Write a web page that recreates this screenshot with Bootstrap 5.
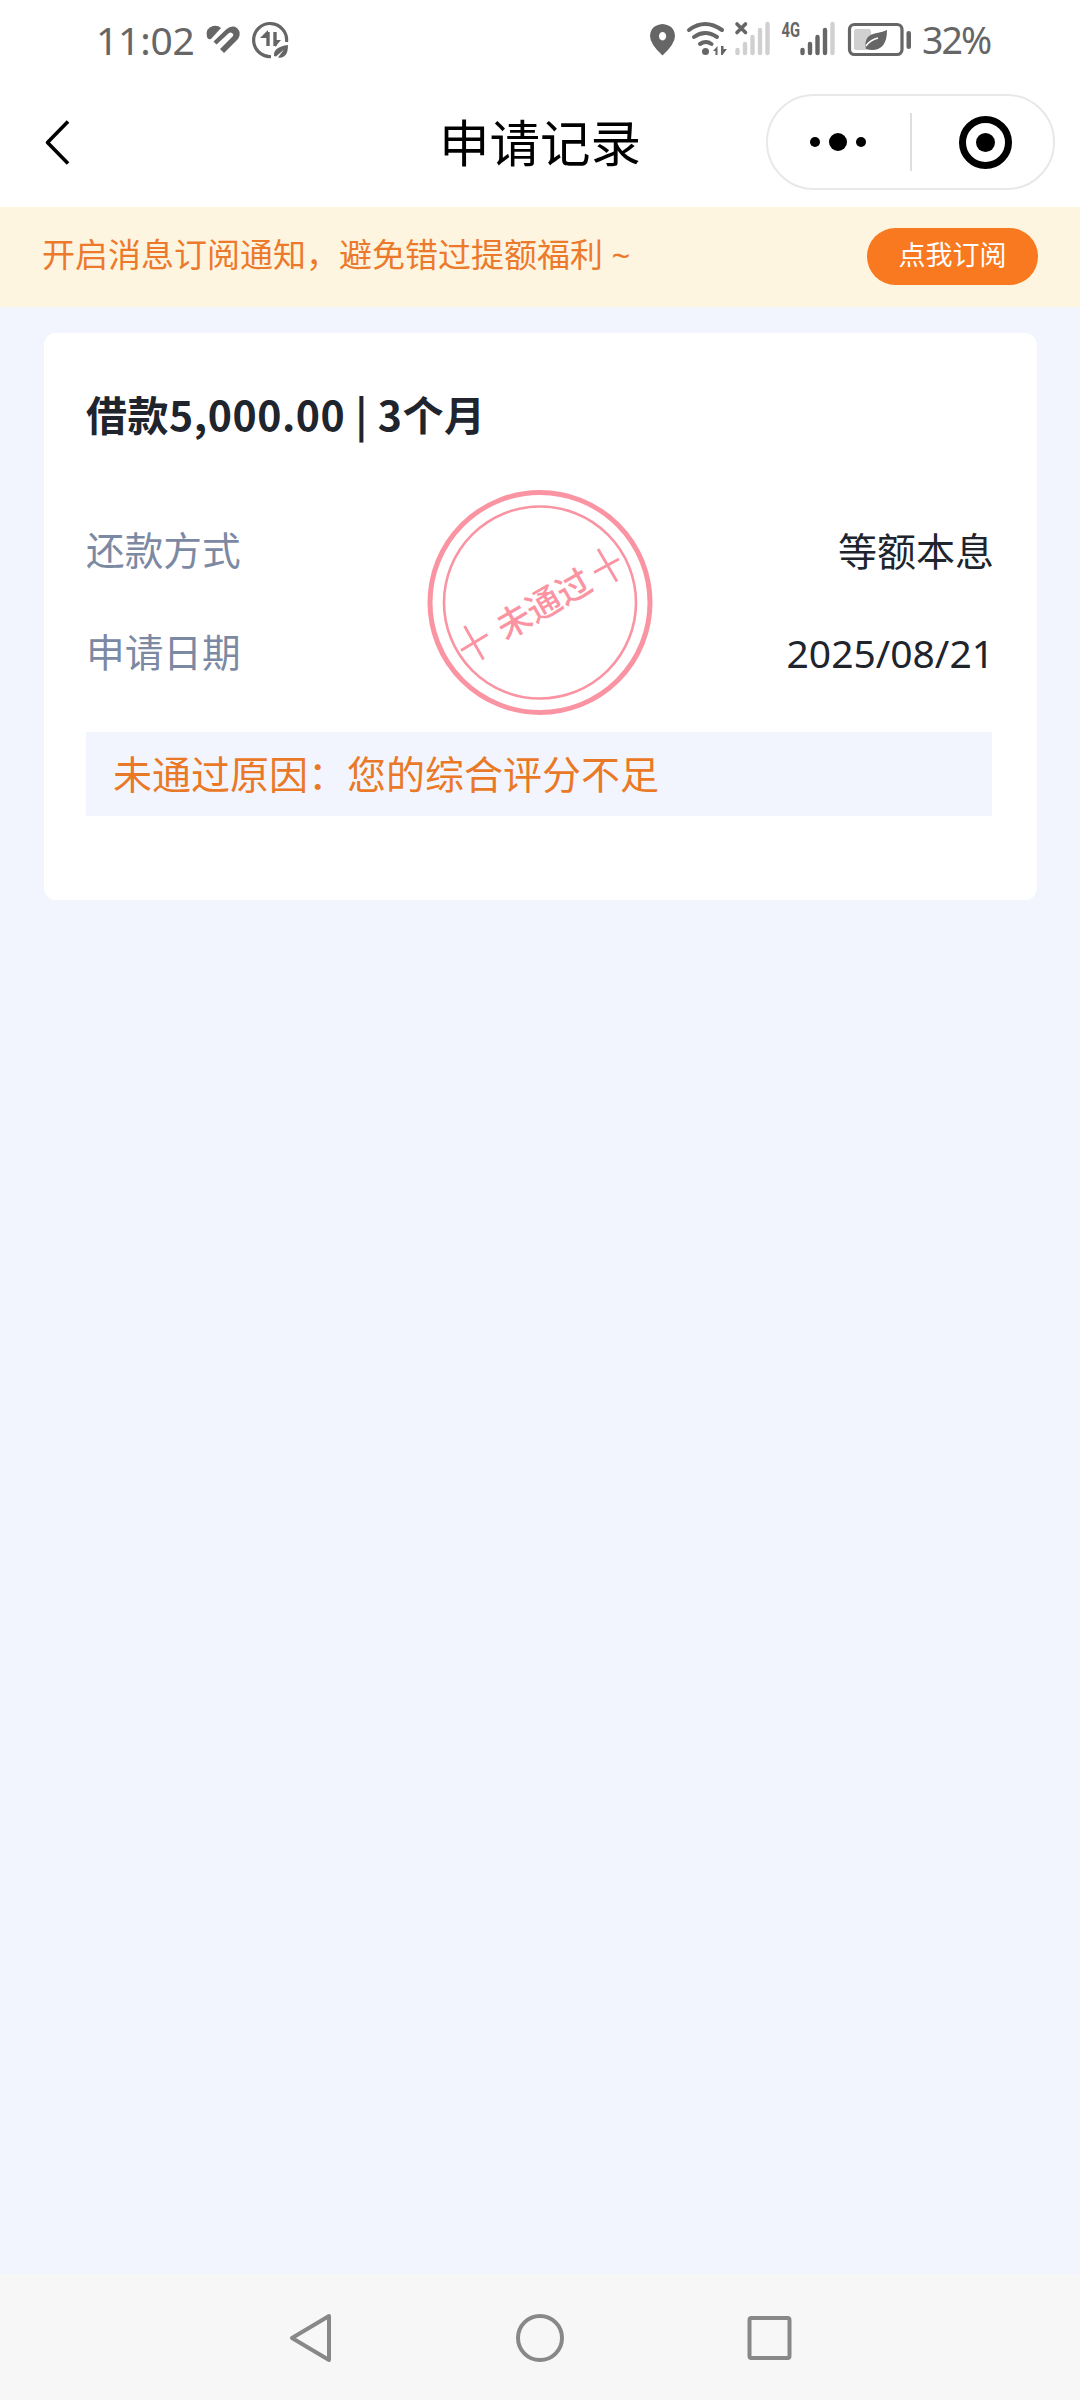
<!DOCTYPE html>
<html lang="zh-CN">

<head>
    <meta charset="UTF-8">
    <meta name="viewport" content="width=device-width, initial-scale=1.0">
    <title>申请记录</title>
    <link rel="stylesheet" href="https://cdn.jsdelivr.net/npm/bootstrap@5.3.0/dist/css/bootstrap.min.css">
    <style>
        body {
            background: #f2f5fe;
            color: #20242d;
            font-family: "Noto Sans", "Noto Sans CJK SC", sans-serif;
            font-size: 39px;
            line-height: 1;
        }

        svg { display: block; flex-shrink: 0; }

        .status-bar { height: 80px; color: #666; padding-left: 96px; padding-right: 90px; }
        .status-time { width: 108px; letter-spacing: -.2px; padding-bottom: 2px; }
        .status-battery { width: 68px; margin-left: 10px; padding-bottom: 1px; letter-spacing: -2px; font-size: 37.500px; }

        .title-bar { height: 127px; padding: 14px 25px 17px 0; }
        .title-bar h1 { font-size: 50.500px; line-height: 96px; color: #000; padding-top: 1px; }
        .title-side { width: 289px; }
        .title-back { width: 314px; }
        .capsule { height: 96px; border: 2px solid #e8e8e8; }
        .capsule-line { width: 2px; height: 58px; background: #dedede; }

        .notice-bar { height: 100px; background: #fef5e1; color: #ec7a2c; padding: 0 42px 2px; font-size: 33px; }
        .notice-bar span { padding-bottom: 4px; }
        .btn-subscribe {
            --bs-btn-bg: #f97920;
            --bs-btn-color: #fff;
            --bs-btn-hover-bg: #e96c15;
            --bs-btn-hover-color: #fff;
            --bs-btn-font-size: 27px;
            --bs-btn-line-height: 1;
            width: 171px;
            height: 57px;
        }

        .record-card {
            --bs-card-border-width: 0;
            --bs-card-border-radius: 12px;
            --bs-card-spacer-x: 42px;
            --bs-card-spacer-y: 0;
            --bs-card-inner-border-radius: 12px;
            margin: 26px 43px 0 44px;
            height: 567px;
        }
        .record-title { font: 700 41px/60px "Noto Sans CJK SC", sans-serif; margin: 50px 0 56px; letter-spacing: .55px; }
        .record-row { height: 102px; padding-right: 1px; }
        .record-label { color: #7c89a2; font-size: 38.700px; }
        .reason { height: 84px; background: #f2f5fe; color: #ea7927; padding: 0 27px 2px; margin: 29px 3px 0 0; }

        .stamp { position: absolute; left: 382px; top: 156px; }
        .stamp text { font: 500 34.500px "Noto Sans CJK SC", sans-serif; }

        .nav-keys { height: 126px; background: #f7f7f7; gap: 179px; padding: 2px 1px 0 0; }
    </style>
</head>

<body>
    <div class="d-flex flex-column min-vh-100">
        <!-- status bar -->
        <div class="status-bar d-flex align-items-center justify-content-between bg-white">
            <div class="d-flex align-items-center">
                <span class="status-time">11:02</span>
                <svg width="88" height="80" viewBox="204 0 88 80" fill="currentColor">
                    <path d="M207 37q-2-9 6-11 5-1 8 2L211 39q-3 1-4-2z"/>
                    <path d="M213.500 41.500L226 29.500q6-5 11-1.500 5 5 1 11L224 53l-4-4 13-13q1-2-1-3-1-1-3 0L216.500 44.500z"/>
                    <path d="M218.500 46.500l11-11" fill="none" stroke="#fff" stroke-width="1.500"/>
                    <path d="M271 56.500A16.500 16.500 0 1 1 286.500 42" fill="none" stroke="currentColor" stroke-width="3.200"/>
                    <path d="M268 32v14M275 32v14" fill="none" stroke="currentColor" stroke-width="3.400"/>
                    <path d="M260 38l8-8v8zM275 47v-7h6z"/>
                    <path d="M274 56q-1-9 14-11 0 14-10 12.500l6-8-8 7z"/>
                </svg>
            </div>
            <div class="d-flex align-items-center">
                <svg width="264" height="80" viewBox="648 0 264 80" fill="currentColor">
                    <!-- location -->
                    <path fill-rule="evenodd" d="M662.500 24q12 1 12.500 12 0 8-12.500 19.500Q650 44 650 36q.500-11 12.500-12zm0 8a3.700 4.200 0 1 0 .1 0z"/>
                    <!-- wifi -->
                    <g fill="none" stroke="currentColor" stroke-width="4" stroke-linecap="round">
                        <path d="M689 30q16-12 33 0M694 37q11-8 23 0M700 44q6-4 11.500 0"/>
                    </g>
                    <circle cx="705.500" cy="51.500" r="3.500"/>
                    <path d="M713 51l4.500-5v9h-2v-4zM721 46h2.500v3h3.500L722.500 55H721z"/>
                    <!-- empty sim -->
                    <path d="M737 24l8.500 8.500M745.500 24l-8.500 8.500" stroke="currentColor" stroke-width="3.600" stroke-linecap="round"/>
                    <path d="M737.500 50v3M745 44v9M752.500 37v16M760 30v23M767.500 24v29" stroke="#d0d0d0" stroke-width="4.400" stroke-linecap="round"/>
                    <!-- 4G sim -->
                    <text x="781.500" y="36.500" font-size="20" font-weight="700" font-family="Roboto, sans-serif" textLength="18.500" lengthAdjust="spacingAndGlyphs">4G</text>
                    <path d="M802.500 50v3M810 44v9M817.500 37v16M825 30v23" stroke="currentColor" stroke-width="4.400" stroke-linecap="round"/>
                    <path d="M832.500 24v29" stroke="#d0d0d0" stroke-width="4.400" stroke-linecap="round"/>
                    <!-- battery -->
                    <rect x="849.500" y="24.500" width="52.500" height="30" rx="5" fill="none" stroke="currentColor" stroke-width="3.200"/>
                    <rect x="854" y="29" width="17" height="21" rx="2" fill="#d0d0d0"/>
                    <rect x="906.500" y="31" width="4.500" height="18" rx="2.200"/>
                    <path d="M866 49q-3-14 11-16 6-1 10-3 0 20-15 20-2 0-5-1z"/>
                    <path d="M866 46q4-6 12-8" stroke="#fff" stroke-width="1.400" fill="none"/>
                </svg>
                <span class="status-battery">32%</span>
            </div>
        </div>

        <!-- title bar -->
        <header class="title-bar d-flex align-items-start justify-content-between bg-white">
            <div class="title-back">
                <svg width="80" height="96" viewBox="0 94 80 96"><path d="M68 121.500L47.500 142.500 68 163.500" fill="none" stroke="#000" stroke-width="3.600" stroke-linejoin="round"/></svg>
            </div>
            <h1 class="m-0 fw-normal">申请记录</h1>
            <div class="title-side capsule rounded-pill d-flex align-items-center">
                <svg width="142" height="92" viewBox="768 96 142 92"><circle cx="815" cy="142" r="5"/><circle cx="838" cy="142" r="9"/><circle cx="861" cy="142" r="5"/></svg>
                <div class="capsule-line"></div>
                <svg width="141" height="92" viewBox="912 96 141 92"><circle cx="985.500" cy="142.500" r="23" fill="none" stroke="#000" stroke-width="7"/><circle cx="985.500" cy="142.500" r="9.500"/></svg>
            </div>
        </header>

        <div class="notice-bar d-flex align-items-center justify-content-between">
            <span>开启消息订阅通知，避免错过提额福利 ~</span>
            <button type="button" class="btn btn-subscribe rounded-pill p-0 pb-1 border-0">点我订阅</button>
        </div>

        <!-- loan record -->
        <main class="flex-grow-1">
            <div class="card record-card">
                <div class="card-body">
                    <h2 class="record-title">借款5,000.00 | 3个月</h2>
                    <div class="record-row d-flex align-items-center justify-content-between">
                        <span class="record-label">还款方式</span>
                        <span>等额本息</span>
                    </div>
                    <div class="record-row d-flex align-items-center justify-content-between">
                        <span class="record-label">申请日期</span>
                        <span>2025/08/21</span>
                    </div>
                    <div class="reason d-flex align-items-center">未通过原因：您的综合评分不足</div>
                </div>
                <svg class="stamp" width="228" height="228" viewBox="426 489 228 228" fill="none" stroke="#fa94a3">
                    <circle cx="540" cy="602.500" r="110" stroke-width="5"/>
                    <circle cx="540" cy="602.500" r="96" stroke-width="2.600"/>
                    <path d="M461 650.500l26.500-16M464.500 626l19 33.500M594 572.500l25-13.500M598 549l19 32.500" stroke-width="2.800"/>
                    <text transform="translate(543.500 603.500) rotate(-30)" y="13" text-anchor="middle" fill="#fa94a3" stroke="none">未通过</text>
                </svg>
            </div>
        </main>

        <!-- system navigation -->
        <footer class="nav-keys d-flex align-items-center justify-content-center">
            <svg width="50" height="52" viewBox="0 0 50 52"><path d="M6 26L43 4v44z" fill="none" stroke="#888" stroke-width="4" stroke-linejoin="round"/></svg>
            <svg width="50" height="52" viewBox="0 0 50 52"><circle cx="25" cy="26" r="22" fill="none" stroke="#888" stroke-width="4"/></svg>
            <svg width="50" height="52" viewBox="0 0 50 52"><rect x="5.500" y="6" width="40" height="40" rx="2" fill="none" stroke="#888" stroke-width="4"/></svg>
        </footer>
    </div>
    <script src="https://cdn.jsdelivr.net/npm/bootstrap@5.3.0/dist/js/bootstrap.bundle.min.js"></script>
</body>

</html>
